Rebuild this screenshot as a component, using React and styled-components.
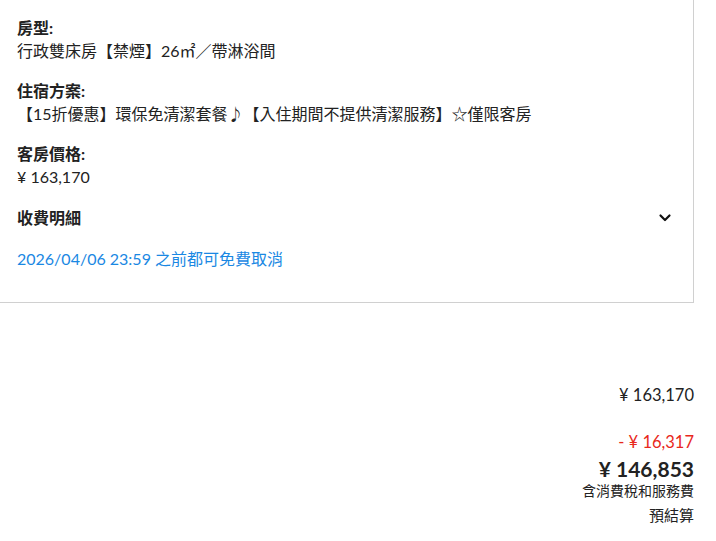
import React from "react";
import styled, { createGlobalStyle } from "styled-components";

const Global = createGlobalStyle`
  html, body { margin: 0; padding: 0; background: #fff; }
  body { font-family: Lato, "Noto Sans CJK TC", sans-serif; color: #222; }
`;

const Page = styled.div`
  width: 716px;
  height: 541px;
  overflow: hidden;
  display: flex;
  flex-direction: column;
`;

const Card = styled.section`
  width: 694px;
  box-sizing: border-box;
  border-right: 1px solid #d0d0d0;
  border-bottom: 1px solid #d0d0d0;
  padding: 17px 21px 32px 17px;
  display: flex;
  flex-direction: column;
  gap: 18px;
`;

const Field = styled.div`
  display: flex;
  flex-direction: column;
  gap: 1px;
`;

const Label = styled.div`
  font-size: 16px;
  font-weight: 700;
  line-height: 22px;
`;

const Value = styled.div`
  font-size: 16px;
  line-height: 22px;
`;

const Toggle = styled.div`
  display: flex;
  align-items: center;
  justify-content: space-between;
  margin-top: 1px;
`;

const Link = styled.div`
  font-size: 16px;
  line-height: 22px;
  color: #1a88e3;
  margin-top: 1px;
`;

const Summary = styled.div`
  width: 694px;
  display: flex;
  flex-direction: column;
  align-items: flex-end;
  padding-top: 81px;
`;

const Amount = styled.div`
  font-size: 16.5px;
  line-height: 22px;
  color: ${p => (p.$discount ? "#e8281c" : "#222")};
  margin-top: ${p => p.$gap || 0}px;
`;

const Total = styled.div`
  font-size: 21px;
  font-weight: 700;
  line-height: 26px;
  margin-top: 3px;
`;

const Note = styled.div`
  font-size: 14px;
  line-height: 18px;
`;

const Pre = styled.div`
  font-size: 15px;
  line-height: 22px;
  margin-top: 4px;
`;

const Chevron = () => (
  <svg width="14" height="14" viewBox="0 0 14 14" fill="none">
    <path d="M2.5 4.5 L7 9 L11.5 4.5" stroke="#111" strokeWidth="2.2" strokeLinecap="round" strokeLinejoin="round" />
  </svg>
);

export default function App() {
  return (
    <Page>
      <Global />
      <Card>
        <Field>
          <Label>房型:</Label>
          <Value>行政雙床房【禁煙】26㎡／帶淋浴間</Value>
        </Field>
        <Field>
          <Label>住宿方案:</Label>
          <Value>【15折優惠】環保免清潔套餐♪【入住期間不提供清潔服務】☆僅限客房</Value>
        </Field>
        <Field>
          <Label>客房價格:</Label>
          <Value>¥ 163,170</Value>
        </Field>
        <Toggle>
          <Label>收費明細</Label>
          <Chevron />
        </Toggle>
        <Link>2026/04/06 23:59 之前都可免費取消</Link>
      </Card>
      <Summary>
        <Amount>¥ 163,170</Amount>
        <Amount $discount $gap={25}>- ¥ 16,317</Amount>
        <Total>¥ 146,853</Total>
        <Note>含消費稅和服務費</Note>
        <Pre>預結算</Pre>
      </Summary>
    </Page>
  );
}
